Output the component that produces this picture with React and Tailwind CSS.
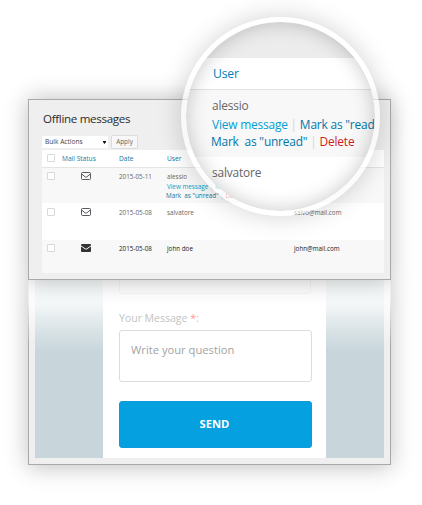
import React from "react";

function OpenEnvelope() {
  return (
    <svg width="10" height="8" viewBox="0 0 10 8" fill="none" stroke="#5a5a5f" strokeWidth="1">
      <rect x="0.5" y="0.5" width="9" height="7" rx="0.9" />
      <path d="M0.8 2.1 L4.2 4.9 Q5 5.5 5.8 4.9 L9.2 2.1" />
    </svg>
  );
}

function SolidEnvelope() {
  return (
    <svg width="10" height="8" viewBox="0 0 10 8">
      <rect width="10" height="8" rx="0.9" fill="#333" />
      <path d="M0 1.9 L4.2 4.9 Q5 5.4 5.8 4.9 L10 1.9" fill="none" stroke="#f8f8f8" strokeWidth="1" />
    </svg>
  );
}

function Checkbox() {
  return <span className="mt-[4px] ml-[5px] block h-2 w-2 rounded-[1px] border border-[#d9d9d9] bg-white" />;
}

function Row({ className, icon, date, user, mail, children }) {
  return (
    <div className={"grid grid-cols-[20px_57px_48px_127px_1fr] text-[6.3px] leading-[9px] " + className}>
      <Checkbox />
      <span className="mt-[4px] ml-[19px]">{icon}</span>
      <span className="mt-[4px]">{date}</span>
      <div className="mt-[4px] whitespace-nowrap">
        {user}
        {children}
      </div>
      <span className="mt-[4px]">{mail}</span>
    </div>
  );
}

function MessagesPanel() {
  return (
    <section className="relative h-[181px] w-[363px] border border-[#a9a9a9] bg-[#efefef] pl-[13px] shadow-[0_0_22px_rgba(0,0,0,0.26)]">
      <h1 className="pt-[11px] text-[11.6px] leading-[16px] tracking-[-0.33px] text-[#2c2c2c]">
        <span className="ml-px">Offline messages</span>
      </h1>
      <div className="mt-[8px] flex h-[14px] items-center text-[6.6px]">
        <div className="flex h-[12px] w-[66px] items-center justify-between bg-white pr-[2px] pl-[3px] text-[#444]">
          Bulk Actions
          <svg width="3" height="3" viewBox="0 0 3 3">
            <path d="M0 0H3V1L1.5 3L0 1Z" fill="#111" />
          </svg>
        </div>
        <div className="ml-[3px] flex h-[14px] w-[27px] items-center justify-center rounded-[1px] border border-[#dcdcdc] bg-[#f7f7f7] text-[6.4px] text-[#666]">
          Apply
        </div>
      </div>
      <div className="mt-[1px] w-[342px]">
        <div className="grid h-[18px] grid-cols-[20px_57px_48px_127px_1fr] border-b border-[#e5e5e5] bg-white text-[6.6px] leading-[17px] text-[#0a7ca8]">
          <Checkbox />
          <span>Mail Status</span>
          <span>Date</span>
          <span>User</span>
        </div>
        <Row className="h-[35px] bg-[#f8f8f8] text-[#666]" icon={<OpenEnvelope />} date="2015-05-11" user="alessio" mail="alessio@mail.com">
          <div className="mt-[1px] text-[#0a7ca8]">
            <span className="text-[#0b9fca]">View message</span> <span className="text-[#ccc]">|</span> Mark as "read"
          </div>
          <div className="-ml-px text-[#0a7ca8]">
            Mark&nbsp; as "unread" <span className="text-[#ccc]">|</span> <span className="text-[#d33]">Delete</span>
          </div>
        </Row>
        <Row className="h-[37px] bg-white pt-px text-[#666]" icon={<OpenEnvelope />} date="2015-05-08" user="salvatore" mail="salvo@mail.com" />
        <Row className="h-[33px] bg-[#f8f8f8] text-[#222]" icon={<SolidEnvelope />} date="2015-05-08" user="john doe" mail="john@mail.com" />
      </div>
    </section>
  );
}

function FormPanel() {
  return (
    <section className="h-[185px] w-[363px] bg-linear-to-b from-[#f4f4f4] from-10% to-[#a9a9a9] to-35% px-px pb-px shadow-[0_2px_22px_rgba(0,0,0,0.25)]">
      <div className="h-full bg-linear-to-b from-[#fdfdfd] from-10% to-[#efefef] to-35% px-[6px] pb-[6px]">
        <div className="flex h-full w-[349px] bg-linear-to-b from-[#f5f8f8] from-13% via-[#dde6e9] via-26% to-[#c8d6dc] to-40%">
          <div className="ml-[68px] h-full w-[223px] bg-linear-to-b from-[#fcfcfc] to-white to-15% pl-[16px]">
            <div className="h-[14px] w-[192px] rounded-b-[4px] border border-t-0 border-[#f5f5f5]" />
            <div className="mt-[16px] text-[10.6px] leading-[16px] tracking-[-0.05px] text-[#c3c3c3]">
              Your Message <span className="text-[#ff9999]">*</span>:
            </div>
            <div className="mt-[4px] h-[52px] w-[193px] rounded-[3px] border border-[#dcdcdc] bg-white pt-[11px] pl-[11px] text-[11.2px] leading-[16px] text-[#a3a3a3]">
              Write your question
            </div>
            <button className="mt-[19px] flex h-[47px] w-[193px] items-center justify-center rounded-[3px] border border-[#0c9bd9] bg-[#04a0e0] pr-[2px] text-[11.2px] font-bold text-white">
              SEND
            </button>
          </div>
        </div>
      </div>
    </section>
  );
}

function Magnifier() {
  return (
    <div className="absolute top-[17px] left-[181px] h-[199px] w-[199px] rounded-full border-[5px] border-white/60 shadow-[0_0_26px_rgba(0,0,0,0.18)]">
      <div className="relative h-[189px] w-[189px] overflow-hidden rounded-full bg-white text-[11.9px] leading-[17px] tracking-[-0.18px] whitespace-nowrap">
        <div className="h-[36px] bg-[#ececec]" />
        <div className="h-[32px] border-b border-[#e2e2e2] pt-[7px] pl-[27px] text-[12.2px] text-[#0083b3]">User</div>
        <div className="h-[67px] bg-[#f8f8f8] pt-[7px] pl-[26px] text-[#0077a8]">
          <div className="text-[#666]">alessio</div>
          <div className="mt-[2px]">
            <span className="text-[#00a0d2]">View message</span> <span className="text-[#d5d5d5]">|</span> Mark as "read
          </div>
          <div className="-ml-[1px]">
            Mark&nbsp; as "unread" <span className="text-[#d5d5d5]">|</span> <span className="text-[#d11a22]">Delete</span>
          </div>
        </div>
        <div className="pt-[7px] pl-[26px] text-[#666]">salvatore</div>
        <div className="absolute inset-0 rounded-full shadow-[inset_0_0_20px_rgba(0,0,0,0.22)]" />
      </div>
    </div>
  );
}

export default function App() {
  return (
    <main className="relative h-[505px] w-[422px] overflow-hidden bg-white pt-[99px] pl-[28px] font-['Open_Sans','Noto_Sans',sans-serif]">
      <MessagesPanel />
      <FormPanel />
      <Magnifier />
    </main>
  );
}
